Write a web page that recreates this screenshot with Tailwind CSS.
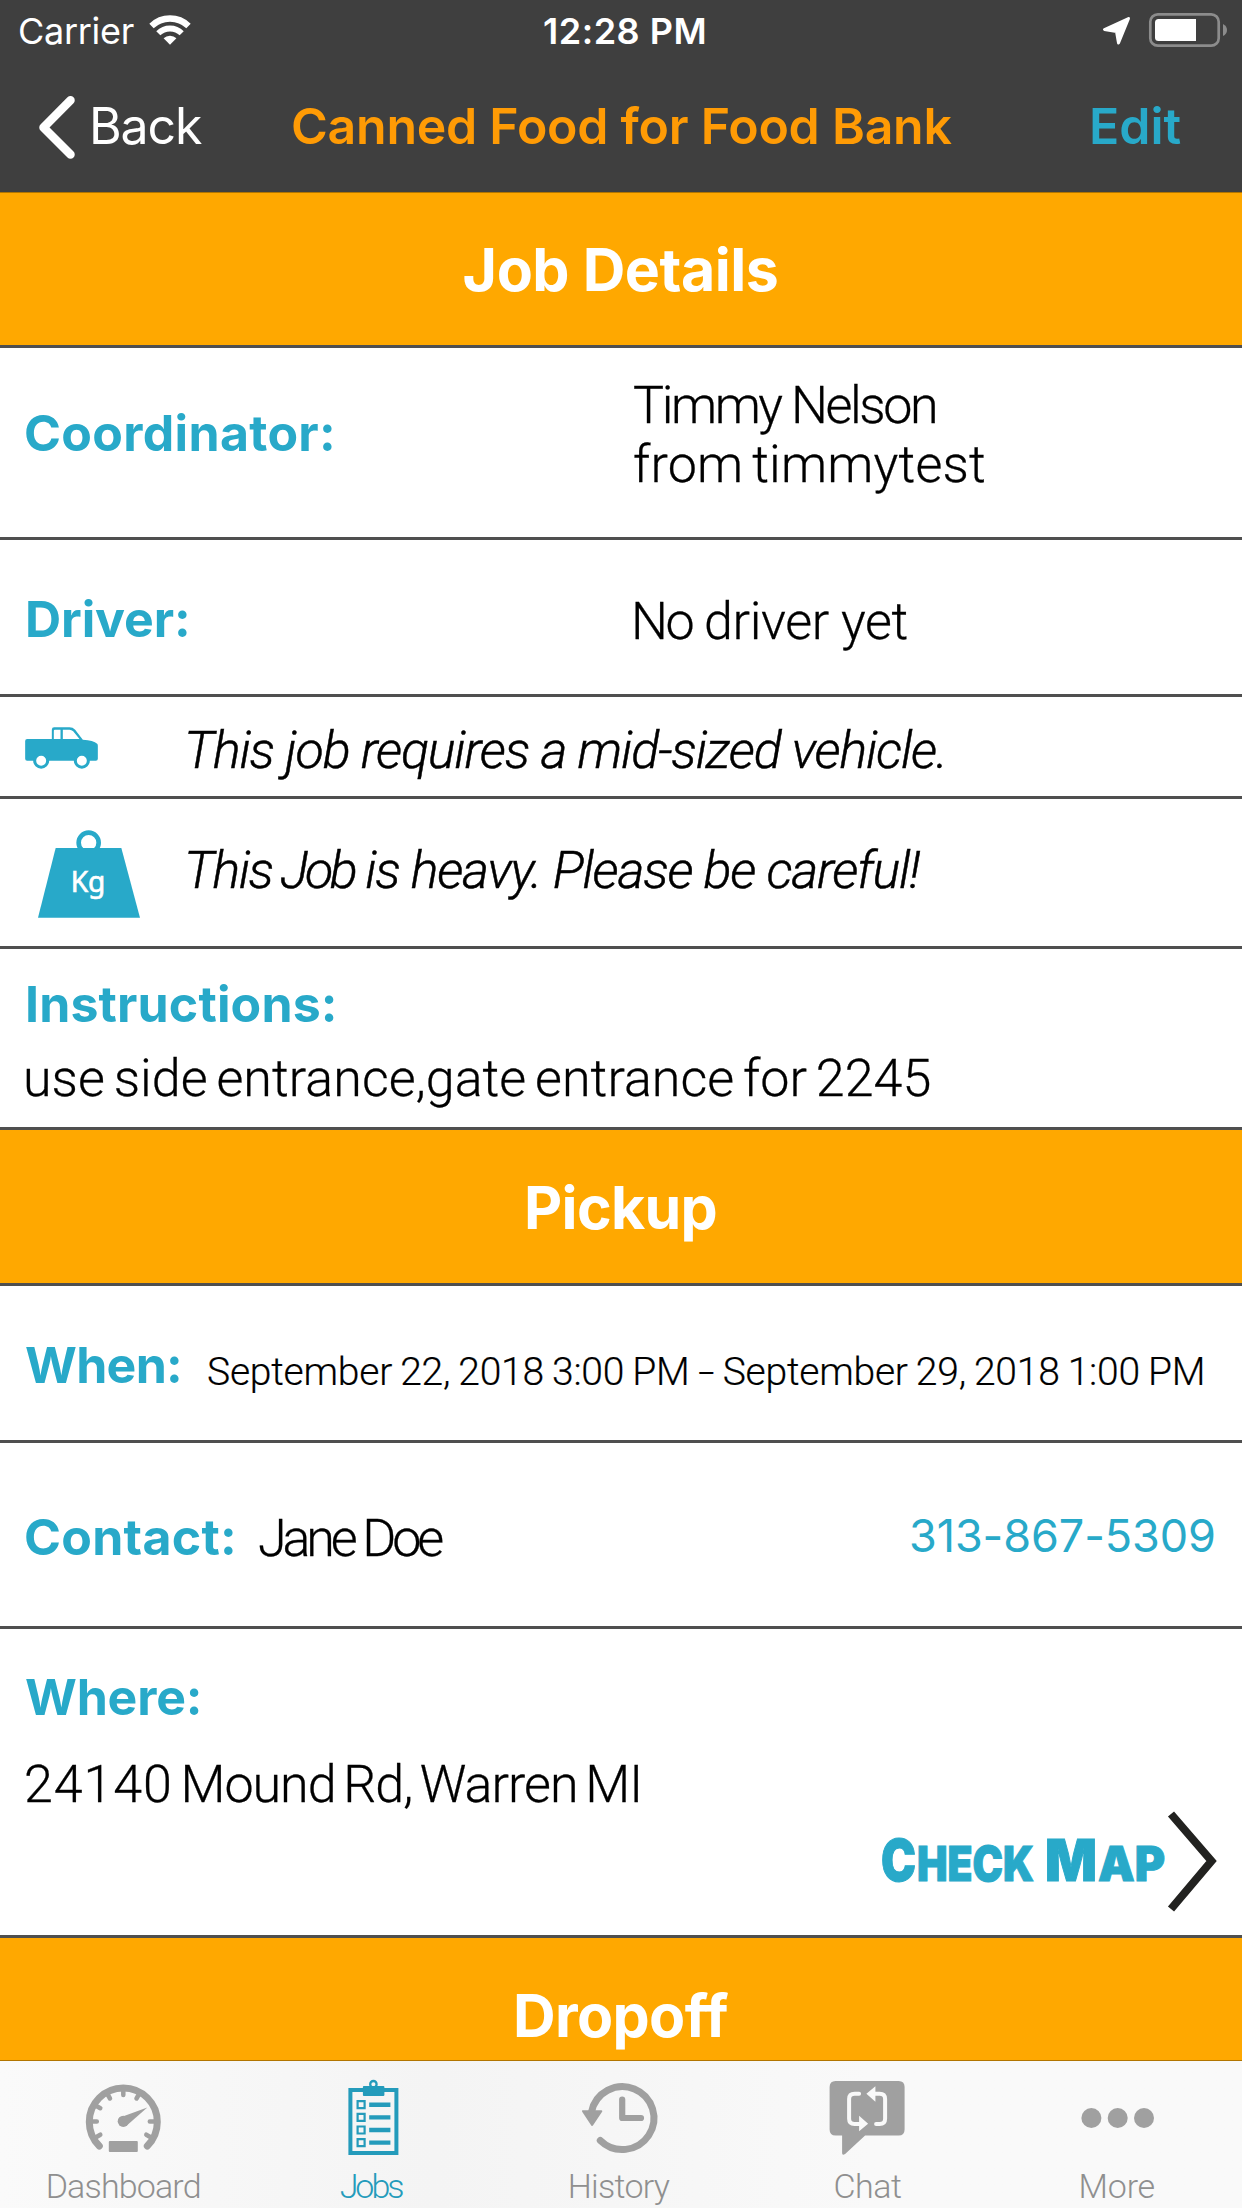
<!DOCTYPE html>
<html lang="en">
<head>
<meta charset="utf-8">
<title>Job Details</title>
<script src="https://cdn.jsdelivr.net/npm/@tailwindcss/browser@4"></script>
</head>
<body class="flex h-[2208px] w-[1242px] flex-col overflow-hidden bg-white font-['Inter',sans-serif] text-black">

<!-- Status bar and navigation -->
<header class="h-[193px] shrink-0 border-b border-[#b27500] bg-[#3f3f3f]">
  <div class="grid h-[80px] grid-cols-3 items-start pt-[9px] text-[36px] leading-[44px] text-white">
    <div class="flex items-start pl-[18px]">
      <span class="tracking-[-0.3px]">Carrier</span>
      <svg class="mt-[4px] ml-[14px] h-[34px] w-[44px]" viewBox="149 13 44 34" fill="none" stroke="#fff">
        <path d="M152.5 26A26.6 26.6 0 0 1 189.500 26" stroke-width="6.300"/>
        <path d="M159.300 33.300A16.600 16.600 0 0 1 182.700 33.300" stroke-width="5.800"/>
        <path d="M171 44.700L164.600 38.300A9.100 9.100 0 0 1 177.400 38.300Z" fill="#fff" stroke="none"/>
      </svg>
    </div>
    <div class="pl-[129px] font-semibold whitespace-nowrap tracking-[0.5px]">12:28 PM</div>
    <div class="flex justify-end pr-[12px]">
      <svg class="mt-[2px] h-[38px] w-[130px]" viewBox="1100 11 130 38">
        <path d="M1128.500 18.500L1104.500 29.500L1116.500 31.500L1118.500 43L1128.500 18.500Z" fill="#fff" stroke="#fff" stroke-width="3" stroke-linejoin="round"/>
        <rect x="1150.300" y="14.300" width="68.400" height="31.400" rx="7.500" fill="none" stroke="#8c8c8c" stroke-width="2.700"/>
        <path d="M1196 19V41H1158.500Q1155 41 1155 37.500V22.500Q1155 19 1158.500 19Z" fill="#fff"/>
        <path d="M1223 24Q1227 26 1227 30T1223 36Z" fill="#8c8c8c"/>
      </svg>
    </div>
  </div>
  <div class="flex items-start pt-[16px] pl-[36px] text-[50px] leading-[60px] whitespace-nowrap">
    <svg class="mt-[-3px] h-[68px] w-[42px]" viewBox="36 92 42 68" fill="none" stroke="#fff" stroke-width="8.500" stroke-linecap="round" stroke-linejoin="round">
      <path d="M70.500 99.300L43.500 126.500L70.500 153.500"/>
    </svg>
    <span class="ml-[11px] w-[202px] tracking-[-1.1px] text-white">Back</span>
    <h1 class="w-[798px] font-semibold tracking-[-0.25px] text-[#ff9b05]">Canned Food for Food Bank</h1>
    <span class="font-semibold text-[#28a9c9]">Edit</span>
  </div>
</header>

<main class="flex min-h-0 flex-1 flex-col overflow-hidden">
  <h2 class="h-[155px] shrink-0 border-b-3 border-[#4f4f4f] bg-[#ffa800] pt-[41px] pr-px text-center text-[59px] leading-[71px] font-bold tracking-[-0.45px] text-white">Job Details</h2>

  <section class="flex h-[192px] shrink-0 border-b-3 border-[#4f4f4f] pl-[24px]">
    <div class="w-[609px] pt-[55px] text-[50px] leading-[60px] font-bold tracking-[0.32px] text-[#28a9c9]">Coordinator:</div>
    <div class="pt-[28px] font-['Roboto'] text-[52px] leading-[59px] font-light whitespace-nowrap [-webkit-text-stroke:0.3px_black]">
      <div class="tracking-[-2.4px]">Timmy Nelson</div>
      <div class="tracking-[0.2px] [word-spacing:-4px]">from timmytest</div>
    </div>
  </section>

  <section class="flex h-[157px] shrink-0 border-b-3 border-[#4f4f4f] pl-[25px]">
    <div class="w-[606px] pt-[49px] text-[50px] leading-[60px] font-bold tracking-[-0.1px] text-[#28a9c9]">Driver:</div>
    <div class="pt-[51px] font-['Roboto'] text-[52px] leading-[61px] font-light tracking-[-0.74px] [-webkit-text-stroke:0.3px_black]"><span class="tracking-[-2.5px]">No</span> <span class="tracking-[-0.4px]">driver yet</span></div>
  </section>

  <section class="flex h-[102px] shrink-0 border-b-3 border-[#4f4f4f] pl-[25px]">
    <div class="w-[159px] pt-[30px]">
      <svg class="h-[42px] w-[73px]" viewBox="0 0 218 126">
        <path fill="#28a9c9" d="M6 36H80V8Q80 1 87 1H133Q143 1 150 8L173 38Q205 40 216 50Q218 52 218 56V95Q218 101 212 101H6Q0 101 0 95V42Q0 36 6 36Z"/>
        <path fill="#fff" d="M86 11Q86 8 89 8H106V36H86ZM113 8H133Q139 8 144 13L163 36H113Z"/>
        <circle cx="48" cy="101" r="19.500" fill="#fff" stroke="#28a9c9" stroke-width="9"/>
        <circle cx="170" cy="101" r="19.500" fill="#fff" stroke="#28a9c9" stroke-width="9"/>
      </svg>
    </div>
    <p class="pt-[23px] font-['Roboto'] text-[52px] leading-[61px] font-light tracking-[-1.2px] italic [-webkit-text-stroke:0.5px_black]">This job requires a mid-sized vehicle.</p>
  </section>

  <section class="flex h-[150px] shrink-0 border-b-3 border-[#4f4f4f] pl-[38px]">
    <div class="w-[146px] pt-[31px]">
      <svg class="h-[88px] w-[102px]" viewBox="0 0 306 262">
        <circle cx="152" cy="37" r="30" fill="none" stroke="#28a9c9" stroke-width="14"/>
        <path d="M53 53H250L306 262H0Z" fill="#28a9c9"/>
        <text x="98" y="184" fill="#fff" stroke="#fff" stroke-width="2" font-family="Noto Sans, sans-serif" font-size="86" textLength="104" lengthAdjust="spacingAndGlyphs">Kg</text>
      </svg>
    </div>
    <p class="pt-[41px] font-['Roboto'] text-[52px] leading-[61px] font-light tracking-[-1.53px] italic [-webkit-text-stroke:0.5px_black]">This <span class="-ml-[3px] tracking-[-3.5px]">Job</span> <span class="tracking-[-1.25px]">is heavy. Please be careful!</span></p>
  </section>

  <section class="h-[181px] shrink-0 border-b-3 border-[#4f4f4f] pt-[25px] pl-[23px]">
    <div class="pl-[2px] text-[50px] leading-[60px] font-bold tracking-[0.15px] text-[#28a9c9]">Instructions:</div>
    <p class="mt-[14px] font-['Roboto'] text-[52px] leading-[61px] font-light tracking-[0.05px] [word-spacing:-4px] [-webkit-text-stroke:0.3px_black]">use side entrance,gate entrance for 2245</p>
  </section>

  <h2 class="h-[156px] shrink-0 border-b-3 border-[#4f4f4f] bg-[#ffa800] pt-[42px] pr-px text-center text-[59px] leading-[71px] font-bold tracking-[-0.72px] text-white">Pickup</h2>

  <section class="flex h-[157px] shrink-0 border-b-3 border-[#4f4f4f] pl-[25px] whitespace-nowrap">
    <div class="w-[182px] pt-[49px] text-[50px] leading-[60px] font-bold tracking-[-0.7px] text-[#28a9c9]">When:</div>
    <p class="pt-[63px] font-['Roboto'] text-[39px] leading-[46px] font-light tracking-[-0.23px] [word-spacing:-1.2px] [-webkit-text-stroke:0.2px_black]">September 22, 2018 3:00 PM <span class="inline-block w-[17px]"><span class="inline-block origin-left scale-x-150">-</span></span> September 29, 2018 1:00 PM</p>
  </section>

  <section class="flex h-[186px] shrink-0 border-b-3 border-[#4f4f4f] pl-[24px]">
    <div class="w-[234px] pt-[64px] text-[50px] leading-[60px] font-bold tracking-[0.27px] text-[#28a9c9]">Contact:</div>
    <p class="w-[651px] pt-[65px] font-['Roboto'] text-[52px] leading-[61px] font-light tracking-[-4.1px] [-webkit-text-stroke:0.3px_black]">Jane Doe</p>
    <span class="pt-[65px] text-[45px] leading-[55px] tracking-[-0.09px] whitespace-nowrap text-[#28a9c9]">313-867-5309</span>
  </section>

  <section class="h-[309px] shrink-0 border-b-3 border-[#4f4f4f] pt-[38px] pl-[24px]">
    <div class="pl-[1px] text-[50px] leading-[60px] font-bold tracking-[-0.2px] text-[#28a9c9]">Where:</div>
    <p class="mt-[27px] font-['Roboto'] text-[52px] leading-[61px] font-light tracking-[-1px] [word-spacing:-4px] [-webkit-text-stroke:0.3px_black]"><span class="tracking-[0.9px]">24140</span> Mound Rd, Warren MI</p>
    <div class="mt-[-6px] flex justify-end pr-[22px]">
      <svg class="h-[106px] w-[340px]" viewBox="880 1809 340 106">
        <g fill="#28a9c9" stroke="#28a9c9" stroke-width="1" font-family="Inter, sans-serif" font-weight="900">
          <text x="881" y="1881" font-size="58" textLength="35" lengthAdjust="spacingAndGlyphs">C</text>
          <text x="917" y="1881" font-size="48" textLength="117" lengthAdjust="spacingAndGlyphs">HECK</text>
          <text x="1045" y="1881" font-size="58" textLength="52" lengthAdjust="spacingAndGlyphs">M</text>
          <text x="1098" y="1881" font-size="48" textLength="67" lengthAdjust="spacingAndGlyphs">AP</text>
        </g>
        <path d="M1171 1814L1211.500 1861L1171 1909" fill="none" stroke="#222220" stroke-width="8"/>
      </svg>
    </div>
  </section>

  <h2 class="h-[156px] shrink-0 bg-[#ffa800] pt-[42px] pr-px text-center text-[59px] leading-[71px] font-bold tracking-[-0.63px] text-white">Dropoff</h2>
</main>

<!-- Tab bar -->
<nav class="grid h-[148px] shrink-0 grid-cols-5 border-t border-[#b27500] bg-linear-to-r from-[#fafafa] via-[#f4f4f4] via-35% to-[#f9f9f9] to-70% font-['Roboto'] text-[34px] leading-[40px] font-light text-[#8f8f8f]">
  <div class="flex flex-col items-center pt-[17px]">
    <svg class="h-[80px] w-[80px]" viewBox="84.200 2078 80 80" fill="none" stroke="#a0a0a0" stroke-linecap="round">
      <path d="M99.500 2146A34 34 0 1 1 147.500 2146" stroke-width="7"/>
      <path d="M90 2121.500H97M157 2121.500H150M123.500 2088V2095M94.500 2104.700L100.500 2108.200M106.700 2092.500L110.200 2098.500M140.200 2092.500L136.700 2098.500M94.500 2138.200L100.500 2134.700M152.500 2138.200L146.500 2134.700" stroke-width="4.500"/>
      <circle cx="123.500" cy="2121.300" r="5.600" fill="#a0a0a0" stroke="none"/>
      <path d="M147.500 2107.500L121.500 2117L127 2125.500Z" fill="#a0a0a0" stroke="none"/>
      <rect x="109" y="2141" width="29" height="11" rx="1" fill="#a0a0a0" stroke="none"/>
    </svg>
    <span class="mt-[8px] mr-[2px] tracking-[-0.84px]">Dashboard</span>
  </div>
  <div class="flex flex-col items-center pt-[17px] text-[#249bbb]">
    <svg class="h-[80px] w-[80px]" viewBox="332.600 2078 80 80" fill="none" stroke="#249bbb">
      <rect x="350" y="2090" width="46" height="63" stroke-width="4"/>
      <rect x="362.500" y="2086" width="21.500" height="10" rx="1" fill="#249bbb" stroke="none"/>
      <circle cx="373" cy="2084.200" r="3.200" stroke-width="2.300"/>
      <path stroke-width="2.200" d="M357.200 2101.200h7v7h-7zM357.200 2113.900h7v7h-7zM357.200 2126.500h7v7h-7zM357.200 2139.100h7v7h-7z"/>
      <path stroke-width="4.400" d="M368.800 2104.800H390M368.800 2117.400H390M368.800 2130H390M368.800 2142.600H390"/>
    </svg>
    <span class="mt-[8px] mr-[4px] tracking-[-3px]">Jobs</span>
  </div>
  <div class="flex flex-col items-center pt-[17px]">
    <svg class="h-[80px] w-[80px]" viewBox="581 2078 80 80" fill="none" stroke="#a0a0a0" stroke-linecap="round" stroke-linejoin="round">
      <path d="M591.500 2112A31.500 31.500 0 1 1 600.300 2140.500" stroke-width="7"/>
      <path d="M583 2111.200H601.300L592.100 2125Z" fill="#a0a0a0" stroke-width="2"/>
      <path d="M622.200 2099.500V2118H641" stroke-width="6.200"/>
    </svg>
    <span class="mt-[8px] mr-[5px] tracking-[-0.73px]">History</span>
  </div>
  <div class="flex flex-col items-center pt-[17px]">
    <svg class="h-[80px] w-[80px]" viewBox="829.400 2078 80 80">
      <path fill="#a0a0a0" d="M836 2081H899Q905 2081 905 2087V2129.500Q905 2135.500 899 2135.500H865.500L845.500 2154Q842.500 2156 842.500 2153V2135.500H836Q830 2135.500 830 2129.500V2087Q830 2081 836 2081Z"/>
      <path fill="none" stroke="#f9f9f9" stroke-width="4" stroke-linecap="round" d="M859.500 2093.700H855Q849.500 2093.700 849.500 2099V2118.700Q849.500 2124 855 2124H860M876.500 2124H880Q885.500 2124 885.500 2118.700V2099Q885.500 2093.700 880 2093.700H875"/>
      <path fill="#f9f9f9" d="M859.500 2115.700L868.500 2123.700L859.500 2131.200ZM875.800 2086.200L866.800 2093.800L875.800 2101.800Z"/>
    </svg>
    <span class="mt-[8px] mr-[4px] tracking-[-0.5px]">Chat</span>
  </div>
  <div class="flex flex-col items-center pt-[17px]">
    <svg class="h-[80px] w-[80px]" viewBox="1077.800 2078 80 80" fill="#a0a0a0">
      <circle cx="1091.200" cy="2118" r="10"/><circle cx="1117.500" cy="2118" r="10"/><circle cx="1143.800" cy="2118" r="10"/>
    </svg>
    <span class="mt-[8px] mr-[2px] tracking-[-0.21px]">More</span>
  </div>
</nav>
</body>
</html>
